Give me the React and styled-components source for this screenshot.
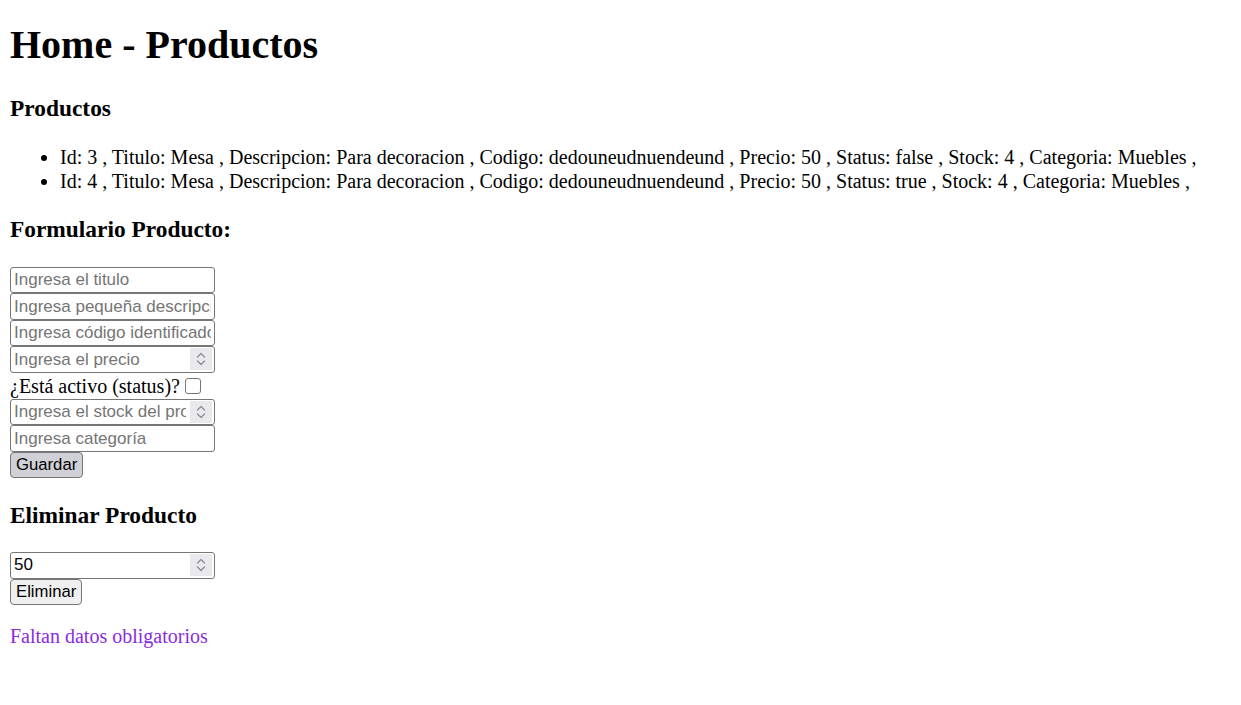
import React, { useState } from 'react';
import styled, { createGlobalStyle } from 'styled-components';

const GlobalStyle = createGlobalStyle`
  body {
    margin: 10px;
    background: #fff;
    color: #000;
    font-family: 'Liberation Serif', 'Times New Roman', serif;
    font-size: 20px;
  }
`;

const Title = styled.h1`
  font-size: 40px;
  font-weight: bold;
  margin: 10.8px 0 26.8px;
`;

const SectionTitle = styled.h3`
  font-size: 23.4px;
  font-weight: bold;
  margin: 23.4px 0;
`;

const List = styled.ul`
  margin: 20px 0;
  padding-left: 50px;
`;

const Item = styled.li`
  line-height: 24px;
`;

const Form = styled.form`
  display: flex;
  flex-direction: column;
  align-items: flex-start;
`;

const Field = styled.input`
  box-sizing: border-box;
  width: 205px;
  height: 26.5px;
  margin: 0;
  padding: 1px 3px;
  border: 1px solid #767676;
  border-radius: 3px;
  font-family: 'Liberation Sans', Arial, sans-serif;
  font-size: 17px;
  color: #000;
  background: #fff;

  &::placeholder {
    color: #757575;
  }

  &::-webkit-inner-spin-button,
  &::-webkit-outer-spin-button {
    -webkit-appearance: none;
    margin: 0;
  }
`;

const NumberWrap = styled.div`
  position: relative;
  width: 205px;
  height: 26.5px;

  ${Field} {
    padding-right: 28px;
  }
`;

const Spinner = styled.span`
  position: absolute;
  top: 2px;
  right: 3px;
  width: 22px;
  height: 22px;
  background: #e9e9ed;
  display: flex;
  align-items: center;
  justify-content: center;
  pointer-events: none;
`;

const CheckRow = styled.label`
  display: flex;
  align-items: center;
  height: 26px;
  line-height: 26px;
`;

const Check = styled.input`
  appearance: none;
  box-sizing: border-box;
  width: 16px;
  height: 16px;
  margin: 0 0 0 5px;
  border: 1.3px solid #767676;
  border-radius: 3px;
  background: #fff;
`;

const Button = styled.button`
  font-family: 'Liberation Sans', Arial, sans-serif;
  font-size: 16.7px;
  height: 26.5px;
  padding: 1px 5px;
  margin: 0;
  border: 1px solid #767676;
  border-radius: 4px;
  color: #000;
  background: ${(props) => (props.$hover ? '#d0d0d7' : '#efefef')};
`;

const Message = styled.p`
  color: #8a2be2;
  margin: 20px 0;
`;

function NumberField(props) {
  return (
    <NumberWrap>
      <Field type='number' {...props} />
      <Spinner>
        <svg width='12' height='18' viewBox='0 0 12 18' fill='none' stroke='#8f8f9d' strokeWidth='1.4' strokeLinecap='round' strokeLinejoin='round'>
          <polyline points='2.5,7 6,3.5 9.5,7' />
          <polyline points='2.5,11 6,14.5 9.5,11' />
        </svg>
      </Spinner>
    </NumberWrap>
  );
}

const productos = [
  { id: 3, titulo: 'Mesa', descripcion: 'Para decoracion', codigo: 'dedouneudnuendeund', precio: 50, status: false, stock: 4, categoria: 'Muebles' },
  { id: 4, titulo: 'Mesa', descripcion: 'Para decoracion', codigo: 'dedouneudnuendeund', precio: 50, status: true, stock: 4, categoria: 'Muebles' },
];

function App() {
  const [eliminarId, setEliminarId] = useState('50');

  return (
    <>
      <GlobalStyle />
      <Title>Home - Productos</Title>
      <SectionTitle>Productos</SectionTitle>
      <List>
        {productos.map((p) => (
          <Item key={p.id}>
            Id: {p.id} , Titulo: {p.titulo} , Descripcion: {p.descripcion} , Codigo: {p.codigo} , Precio: {p.precio} , Status: {String(p.status)} , Stock: {p.stock} , Categoria: {p.categoria} ,
          </Item>
        ))}
      </List>
      <SectionTitle>Formulario Producto:</SectionTitle>
      <Form onSubmit={(e) => e.preventDefault()}>
        <Field type='text' placeholder='Ingresa el titulo' />
        <Field type='text' placeholder='Ingresa pequeña descripción' />
        <Field type='text' placeholder='Ingresa código identificador' />
        <NumberField placeholder='Ingresa el precio' />
        <CheckRow>
          ¿Está activo (status)?
          <Check type='checkbox' />
        </CheckRow>
        <NumberField placeholder='Ingresa el stock del producto' />
        <Field type='text' placeholder='Ingresa categoría' />
        <Button type='submit' $hover>Guardar</Button>
      </Form>
      <SectionTitle>Eliminar Producto</SectionTitle>
      <Form onSubmit={(e) => e.preventDefault()}>
        <NumberField value={eliminarId} onChange={(e) => setEliminarId(e.target.value)} />
        <Button type='submit'>Eliminar</Button>
      </Form>
      <Message>Faltan datos obligatorios</Message>
    </>
  );
}

export default App;
